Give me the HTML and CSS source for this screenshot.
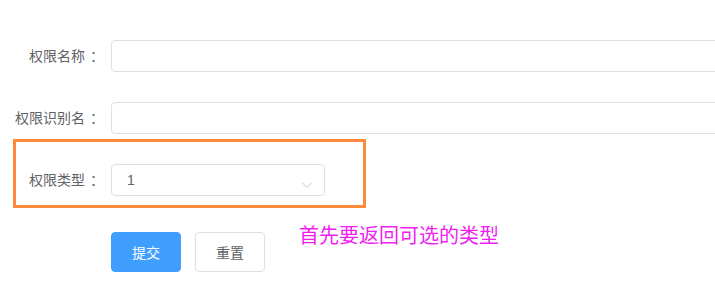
FILE: index.html
```html
<!DOCTYPE html>
<html lang="zh">
<head>
<meta charset="utf-8">
<link rel="stylesheet" href="styles.css">
</head>
<body>
<div class="page">
  <div class="form-item first">
    <label class="label">权限名称<span class="colon">：</span></label>
    <div class="input"></div>
  </div>
  <div class="form-item second">
    <label class="label">权限识别名<span class="colon">：</span></label>
    <div class="input"></div>
  </div>
  <div class="highlight">
    <div class="form-item">
      <label class="label inner">权限类型<span class="colon">：</span></label>
      <div class="select">
        <span class="select-value">1</span>
        <svg class="arrow" width="12" height="8" viewBox="0 0 12 8"><path d="M1 1.5 L6 6.5 L11 1.5" fill="none" stroke="#c0c4cc" stroke-width="1"/></svg>
      </div>
    </div>
  </div>
  <div class="actions">
    <button class="btn primary">提交</button>
    <button class="btn">重置</button>
    <span class="note">首先要返回可选的类型</span>
  </div>
</div>
</body>
</html>
```
FILE: styles.css
```css
html, body {
  margin: 0;
  padding: 0;
  background: #fff;
}
body {
  font-family: "Noto Sans CJK SC", "Noto Sans", sans-serif;
  font-size: 14px;
  color: #606266;
  overflow: hidden;
}
.page {
  padding-top: 40px;
  width: 715px;
  overflow: hidden;
}
.form-item {
  display: flex;
  align-items: center;
}
.form-item.first {
  margin-bottom: 30px;
}
.form-item.second {
  margin-bottom: 5px;
}
.label {
  flex: none;
  width: 111px;
  box-sizing: border-box;
  padding-right: 12px;
  padding-bottom: 2px;
  text-align: right;
  font-size: 14px;
  line-height: 30px;
  color: #606266;
}
.label.inner {
  width: 95px;
}
.colon {
  display: inline-block;
  padding-left: 5px;
  margin-right: -5px;
}
.input {
  flex: none;
  width: 640px;
  height: 32px;
  box-sizing: border-box;
  border: 1px solid #dcdfe6;
  border-radius: 4px;
  background: #fff;
}
.highlight {
  margin-left: 13px;
  width: 353px;
  height: 69px;
  box-sizing: border-box;
  border: 3px solid #fd8a3a;
  padding-top: 22px;
}
.select {
  flex: none;
  width: 214px;
  height: 32px;
  box-sizing: border-box;
  border: 1px solid #dcdfe6;
  border-radius: 4px;
  display: flex;
  align-items: center;
  justify-content: space-between;
  padding: 0 11px 0 15px;
}
.select-value {
  font-family: "Liberation Sans", "Noto Sans", sans-serif;
  font-size: 14px;
  color: #606266;
  line-height: 30px;
}
.arrow {
  margin-top: 9px;
}
.actions {
  display: flex;
  align-items: flex-start;
  margin-top: 24px;
  padding-left: 111px;
}
.btn {
  flex: none;
  width: 70px;
  height: 40px;
  box-sizing: border-box;
  border: 1px solid #dcdfe6;
  border-radius: 4px;
  background: #fff;
  color: #606266;
  font-family: "Noto Sans CJK SC", sans-serif;
  font-size: 14px;
  padding: 0;
  margin: 0 14px 0 0;
}
.btn.primary {
  background: #409eff;
  border-color: #409eff;
  color: #fff;
}
.note {
  margin-left: 20px;
  margin-top: -9px;
  font-size: 20px;
  line-height: 24px;
  color: #f01ef0;
}
```
